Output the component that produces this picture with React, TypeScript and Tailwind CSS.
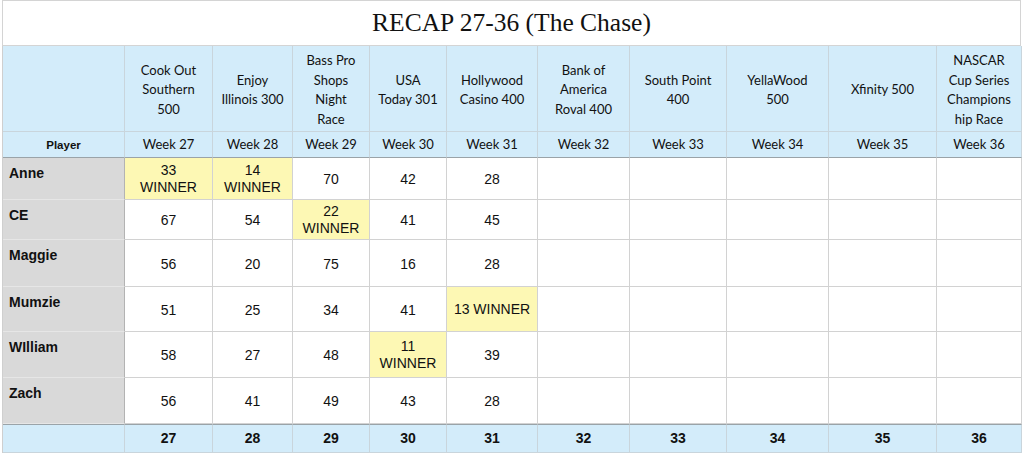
const races: string[][] = [
  ["Cook Out", "Southern", "500"],
  ["Enjoy", "Illinois 300"],
  ["Bass Pro", "Shops", "Night", "Race"],
  ["USA", "Today 301"],
  ["Hollywood", "Casino 400"],
  ["Bank of", "America", "Roval 400"],
  ["South Point", "400"],
  ["YellaWood", "500"],
  ["Xfinity 500"],
  ["NASCAR", "Cup Series", "Champions", "hip Race"],
];

const weeks = [27, 28, 29, 30, 31, 32, 33, 34, 35, 36];

type Score = { v: string; win?: boolean; oneLine?: boolean };

const players: { name: string; scores: Score[] }[] = [
  { name: "Anne", scores: [{ v: "33", win: true }, { v: "14", win: true }, { v: "70" }, { v: "42" }, { v: "28" }] },
  { name: "CE", scores: [{ v: "67" }, { v: "54" }, { v: "22", win: true }, { v: "41" }, { v: "45" }] },
  { name: "Maggie", scores: [{ v: "56" }, { v: "20" }, { v: "75" }, { v: "16" }, { v: "28" }] },
  { name: "Mumzie", scores: [{ v: "51" }, { v: "25" }, { v: "34" }, { v: "41" }, { v: "13", win: true, oneLine: true }] },
  { name: "WIlliam", scores: [{ v: "58" }, { v: "27" }, { v: "48" }, { v: "11", win: true }, { v: "39" }] },
  { name: "Zach", scores: [{ v: "56" }, { v: "41" }, { v: "49" }, { v: "43" }, { v: "28" }] },
];

const sans = "font-['Liberation_Sans',Arial,sans-serif]";
const lato = "font-['Lato','Open_Sans',sans-serif]";

export default function App() {
  return (
    <div className="w-[1024px] h-[457px] bg-white pl-[2px] pr-[3px]">
      <div className="h-[46px] border border-[#d4d4d4] flex items-center justify-center font-['Liberation_Serif','Times_New_Roman',serif] text-[25.5px] text-[#111]">
        RECAP 27-36 (The Chase)
      </div>
      <div
        className={`grid grid-cols-[122px_88px_80px_77px_77px_91px_92px_97px_102px_108px_85px] grid-rows-[86px_26px_42px_40px_47px_45px_46px_46px_29px] border-l border-[#cfcfcf] ${sans}`}
      >
        {/* race names */}
        <div className="bg-[#d3ecfa] border-r border-b border-[#c9d5dc]" />
        {races.map((r, i) => (
          <div
            key={i}
            className={`bg-[#d3ecfa] border-r border-b border-[#c9d5dc] flex flex-col items-center justify-center pt-[3px] text-center ${lato} text-[13px] leading-[19.5px] text-[#111]`}
          >
            {r.map((line, j) => (
              <span key={j}>{line}</span>
            ))}
          </div>
        ))}

        {/* week row */}
        <div className="bg-[#d3ecfa] border-r border-b border-b-[#9aa3a8] border-r-[#c9d5dc] flex items-center justify-center text-[11.5px] font-bold text-[#111] pt-[2px]">
          Player
        </div>
        {weeks.map((w) => (
          <div
            key={w}
            className={`bg-[#d3ecfa] border-r border-b border-b-[#9aa3a8] border-r-[#c9d5dc] flex items-center justify-center pt-[1px] ${lato} text-[13px] text-[#111]`}
          >
            Week {w}
          </div>
        ))}

        {/* players */}
        {players.map((p) => (
          <div key={p.name} className="contents">
            <div className="bg-[#d9d9d9] border-r border-b border-r-[#b3b3b3] border-b-[#e6e6e6] pl-[6px] pt-[7px] text-[14px] font-bold text-[#111] leading-[16px]">
              {p.name}
            </div>
            {weeks.map((_, i) => {
              const s = p.scores[i];
              return (
                <div
                  key={i}
                  className={`border-r border-b border-[#d2d2d2] flex flex-col items-center justify-center text-center text-[14px] leading-[17px] text-[#111] ${
                    s?.win ? "bg-[#fdf8b4]" : "bg-white"
                  }`}
                >
                  {s && !s.win && <span className="pt-[2px]">{s.v}</span>}
                  {s?.win && s.oneLine && <span>{s.v} WINNER</span>}
                  {s?.win && !s.oneLine && (
                    <>
                      <span>{s.v}</span>
                      <span>WINNER</span>
                    </>
                  )}
                </div>
              );
            })}
          </div>
        ))}

        {/* totals */}
        <div className="bg-[#d3ecfa] border-r border-b border-t border-[#c9d5dc] border-t-[#9aa3a8]" />
        {weeks.map((w) => (
          <div
            key={w}
            className="bg-[#d3ecfa] border-r border-b border-t border-[#c9d5dc] border-t-[#9aa3a8] flex items-center justify-center text-[14px] font-bold text-[#111]"
          >
            {w}
          </div>
        ))}
      </div>
    </div>
  );
}
